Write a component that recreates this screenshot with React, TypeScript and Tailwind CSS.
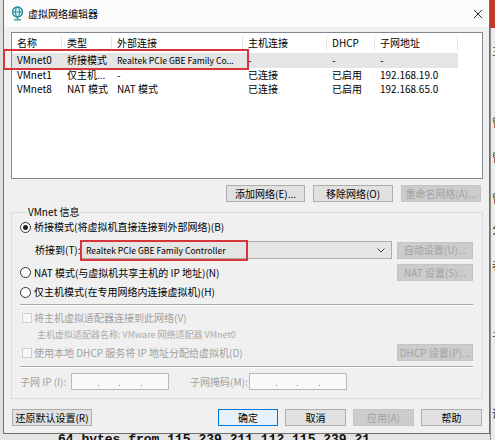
import React from 'react';

const cols = [
  { w: 'w-[49px]', label: '名称' },
  { w: 'w-[49px]', label: '类型' },
  { w: 'w-[130px]', label: '外部连接' },
  { w: 'w-[83px]', label: '主机连接' },
  { w: 'w-[47px]', label: 'DHCP' },
  { w: 'w-[82px]', label: '子网地址' },
];

const rows = [
  ['VMnet0', '桥接模式', 'Realtek PCIe GBE Family Co...', '-', '-', '-'],
  ['VMnet1', '仅主机...', '-', '已连接', '已启用', '192.168.19.0'],
  ['VMnet8', 'NAT 模式', 'NAT 模式', '已连接', '已启用', '192.168.65.0'],
];

const Btn: React.FC<{ label: string; w: string; disabled?: boolean; focus?: boolean }> = ({ label, w, disabled, focus }) => (
  <div
    className={`${w} h-[17px] flex items-center justify-center whitespace-nowrap border ${
      disabled
        ? 'bg-[#cccccc] border-[#c4c4c4] text-[#a2a2a2]'
        : focus
        ? 'bg-[#e5f1fb] border-[#0078d7] text-black'
        : 'bg-[#e1e1e1] border-[#adadad] text-black'
    }`}
  >
    {label}
  </div>
);

const Radio: React.FC<{ checked?: boolean }> = ({ checked }) => (
  <div className="w-[11px] h-[11px] rounded-full border border-[#333333] bg-white flex items-center justify-center">
    {checked && <div className="w-[5px] h-[5px] rounded-full bg-[#222222]" />}
  </div>
);

const Check = () => <div className="w-[10px] h-[10px] border border-[#cfcfcf] bg-[#f7f7f7]" />;

const Sep = () => (
  <div className="mt-[5px] mr-[9px] flex flex-col">
    <div className="h-px bg-[#a9a9a9]" />
    <div className="h-px bg-white" />
  </div>
);

const IpBox = () => (
  <div className="w-[98px] h-[17px] border border-[#b9b9b9] bg-[#f9f9f9] flex items-end justify-around px-[16px] pb-[3px]">
    <span className="w-px h-px bg-[#8a8a8a]" />
    <span className="w-px h-px bg-[#8a8a8a]" />
    <span className="w-px h-px bg-[#8a8a8a]" />
  </div>
);

export default function App() {
  return (
    <div className="w-[495px] h-[440px] overflow-hidden flex bg-[#dedede] font-['Noto_Sans_CJK_SC','Liberation_Sans',sans-serif] text-[10px] leading-none text-black">
      <div className="w-[490px] flex flex-col">
        {/* dialog */}
        <div className="ml-[3px] w-[487px] h-[434px] border-l border-r border-b border-[#6f6f6f] bg-[#f0f0f0] flex flex-col">
          {/* title bar */}
          <div className="h-[27px] bg-[#fbfbfb] flex items-center">
            <svg width="13" height="15" viewBox="0 0 13 15" className="ml-[7px]">
              <circle cx="6.5" cy="6" r="5" fill="#dff3f5" stroke="#1a8b9c" strokeWidth="1.3" />
              <ellipse cx="6.5" cy="6" rx="2" ry="5" fill="none" stroke="#1a8b9c" strokeWidth="1" />
              <line x1="1.5" y1="6" x2="11.5" y2="6" stroke="#1a8b9c" strokeWidth="1" />
              <line x1="6.5" y1="11" x2="6.5" y2="13.5" stroke="#1a8b9c" strokeWidth="1.2" />
              <line x1="3" y1="13.8" x2="10" y2="13.8" stroke="#1a8b9c" strokeWidth="1.2" />
            </svg>
            <span className="ml-[4px] text-[10px]">虚拟网络编辑器</span>
            <div className="flex-1" />
            <svg width="10" height="10" viewBox="0 0 10 10" className="mr-[6px]">
              <path d="M1 1 L9 9 M9 1 L1 9" stroke="#222" strokeWidth="1" />
            </svg>
          </div>

          {/* list */}
          <div className="mt-[5px] ml-[7px] w-[472px] h-[147px] border border-[#828790] bg-white flex flex-col">
            <div className="h-[20px] flex items-center">
              {cols.map((c) => (
                <React.Fragment key={c.label}>
                  <div className={`${c.w} pl-[5px]`}>{c.label}</div>
                  <div className="w-px h-[14px] bg-[#e5e5e5]" />
                </React.Fragment>
              ))}
            </div>
            {rows.map((r, i) => (
              <div key={r[0]} className={`relative w-[446px] h-[14.5px] flex items-center ${i === 0 ? 'bg-[#e5e5e5]' : ''}`}>
                {cols.map((c, j) => (
                  <div
                    key={c.label}
                    className={`${c.w} mr-px pl-[5px] whitespace-nowrap ${r[j].startsWith('Realtek') ? 'text-[8.6px]' : ''}`}
                  >
                    {r[j]}
                  </div>
                ))}
                {i === 0 && (
                  <div className="absolute -left-[9px] -top-[4px] w-[246px] h-[21px] border-2 border-[#d8353a]" />
                )}
              </div>
            ))}
          </div>

          {/* network buttons */}
          <div className="mt-[6px] pr-[8px] flex justify-end gap-[8px]">
            <Btn w="w-[79px]" label="添加网络(E)..." />
            <Btn w="w-[80px]" label="移除网络(O)" />
            <Btn w="w-[80px]" label="重命名网络(A)..." disabled />
          </div>

          {/* VMnet info */}
          <fieldset className="mt-[5px] ml-[7px] w-[472px] border border-[#dcdcdc] pl-[8px] pb-[8px]">
            <legend className="ml-[7px] px-[1px] h-[10px]">VMnet 信息</legend>

            <div className="mt-[3px] h-[14px] flex items-center gap-[3px]">
              <Radio checked />
              <span>桥接模式(将虚拟机直接连接到外部网络)(B)</span>
            </div>

            <div className="mt-[7px] h-[18px] flex items-center pr-[9px]">
              <span className="ml-[15px] w-[45px] whitespace-nowrap">桥接到(T):</span>
              <div className="relative w-[312px] h-[18px] border border-[#acacac] bg-[#e5e5e5] flex items-center pl-[5px]">
                <span className="text-[8.6px]">Realtek PCIe GBE Family Controller</span>
                <div className="flex-1" />
                <svg width="8" height="5" viewBox="0 0 8 5" className="mr-[6px]">
                  <path d="M0.5 0.5 L4 4 L7.5 0.5" fill="none" stroke="#444" strokeWidth="1" />
                </svg>
                <div className="absolute -left-px -top-[2px] w-[168px] h-[21px] border-2 border-[#d8353a]" />
              </div>
              <div className="flex-1" />
              <Btn w="w-[76px]" label="自动设置(U)..." disabled />
            </div>

            <div className="mt-[5px] h-[17px] flex items-center gap-[3px] pr-[9px]">
              <Radio />
              <span>NAT 模式(与虚拟机共享主机的 IP 地址)(N)</span>
              <div className="flex-1" />
              <Btn w="w-[76px]" label="NAT 设置(S)..." disabled />
            </div>

            <div className="mt-[4px] h-[14px] flex items-center gap-[3px]">
              <Radio />
              <span>仅主机模式(在专用网络内连接虚拟机)(H)</span>
            </div>

            <Sep />

            <div className="mt-[5px] h-[14px] flex items-center gap-[2px] pl-[2px] text-[#a0a0a0]">
              <Check />
              <span>将主机虚拟适配器连接到此网络(V)</span>
            </div>

            <div className="mt-[2px] h-[14px] flex items-center pl-[17px] text-[9px] text-[#ababab]">
              主机虚拟适配器名称: VMware 网络适配器 VMnet0
            </div>

            <div className="mt-[3px] h-[17px] flex items-center gap-[2px] pl-[2px] pr-[9px] text-[#a0a0a0]">
              <Check />
              <span>使用本地 DHCP 服务将 IP 地址分配给虚拟机(D)</span>
              <div className="flex-1" />
              <Btn w="w-[76px]" label="DHCP 设置(P)..." disabled />
            </div>

            <Sep />

            <div className="mt-[5px] h-[17px] flex items-center text-[#a0a0a0]">
              <span className="w-[51px] whitespace-nowrap">子网 IP (I):</span>
              <IpBox />
              <span className="ml-[21px] w-[59px] whitespace-nowrap">子网掩码(M):</span>
              <IpBox />
            </div>
          </fieldset>

          {/* bottom buttons */}
          <div className="mt-[10px] pl-[8px] pr-[7px] flex items-center">
            <Btn w="w-[80px]" label="还原默认设置(R)" />
            <div className="flex-1" />
            <div className="flex gap-[7px]">
              <Btn w="w-[60px]" label="确定" focus />
              <Btn w="w-[61px]" label="取消" />
              <Btn w="w-[61px]" label="应用(A)" disabled />
              <Btn w="w-[61px]" label="帮助" />
            </div>
          </div>
        </div>

        {/* terminal peeking out below */}
        <div className="h-[6px] overflow-hidden pl-[58px] bg-[#e4e4e4]">
          <div className="-mt-[1px] font-['Liberation_Mono',monospace] text-[13px] leading-[14px] font-bold text-[#111] whitespace-nowrap">
            64 bytes from 115.239.211.112 115.239.21
          </div>
        </div>
      </div>

      {/* background window strip on the right */}
      <div className="w-[5px] flex flex-col overflow-hidden">
        <div className="h-[28px] bg-[#c0392b]" />
        <div className="flex-1 bg-[#ececec] border-l border-[#8a8a8a] pl-px text-[11px] text-[#333] flex flex-col">
          <span className="mt-[18px]">三</span>
          <span className="mt-[60px]">管</span>
          <span className="mt-[24px]">管</span>
          <span className="mt-[30px]">管</span>
          <span className="mt-[20px]">分</span>
          <span className="mt-[25px]">者</span>
          <span className="mt-[60px]">子</span>
          <span className="mt-[66px]">话</span>
        </div>
      </div>
    </div>
  );
}
